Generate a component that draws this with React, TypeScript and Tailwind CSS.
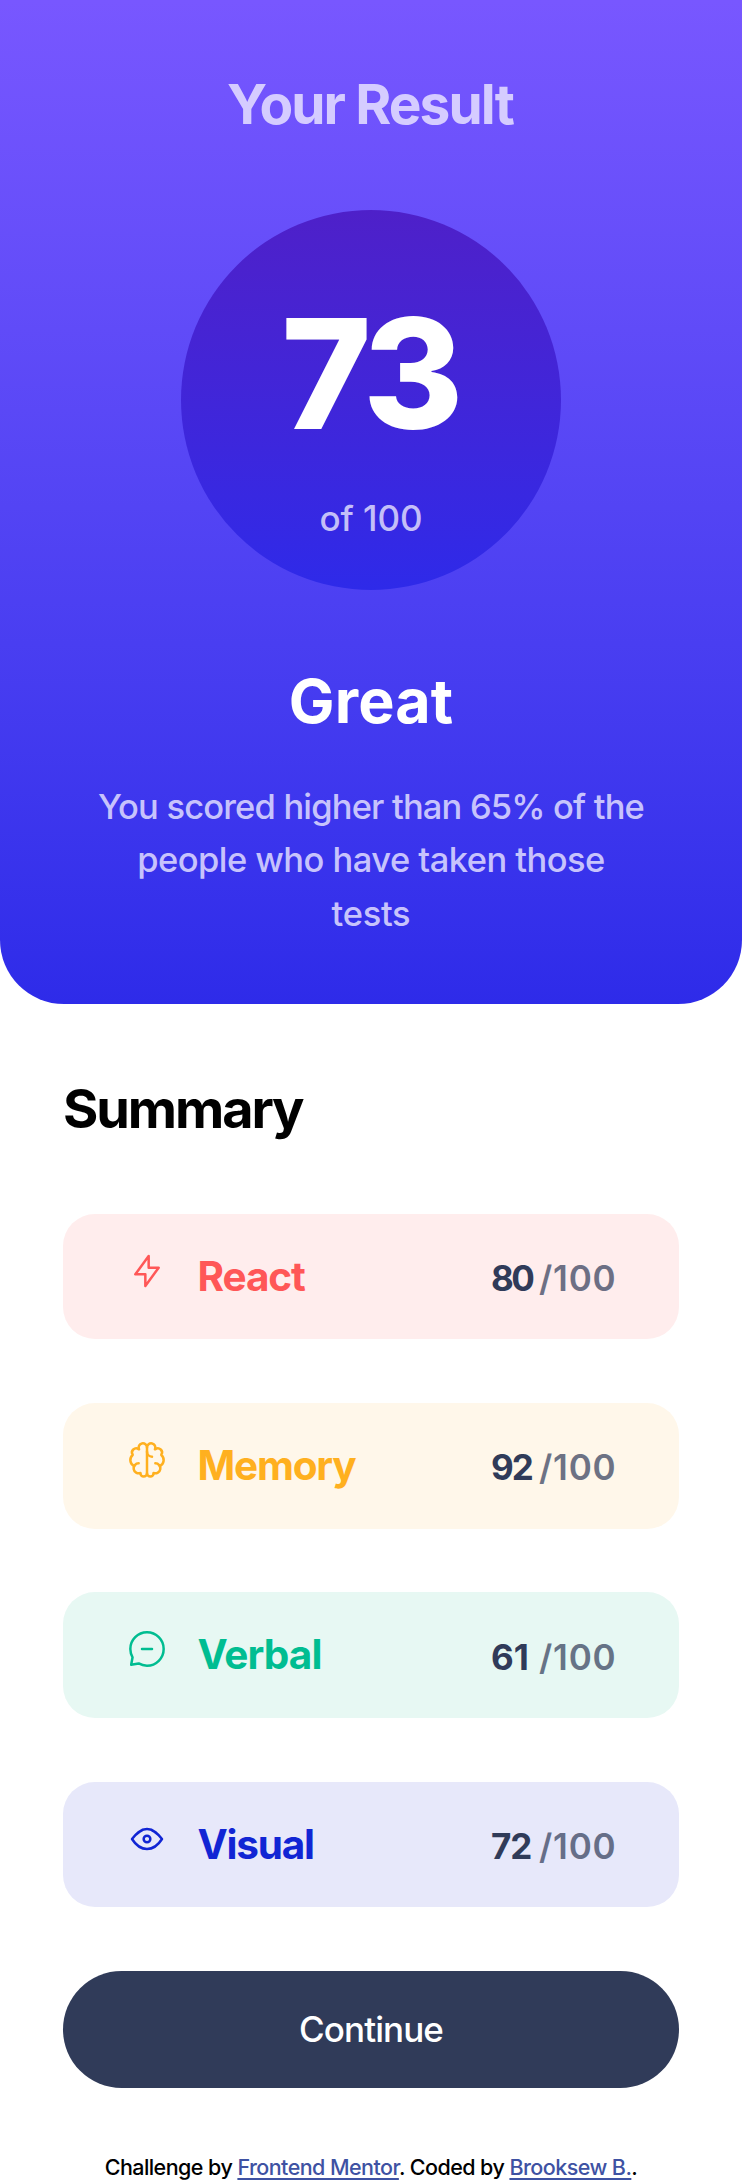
import type { ReactNode } from "react";

type Category = {
  name: string;
  score: number;
  card: string;
  label: string;
  digits: string;
  icon: ReactNode;
};

const categories: Category[] = [
  {
    name: "React",
    score: 80,
    card: "bg-[#ffeded]",
    label: "text-[#ff5757] tracking-[-1.1px]",
    digits: "tracking-[-2.5px]",
    icon: <path d="M10.833 8.333V2.5l-6.666 9.167h5V17.5l6.666-9.167h-5Z" />,
  },
  {
    name: "Memory",
    score: 92,
    card: "bg-[#fff7ea]",
    label: "text-[#ffb01f] tracking-[-1.2px]",
    digits: "tracking-[-2px]",
    icon: (
      <>
        <path d="M5.833 11.667a2.5 2.5 0 1 0 .834 4.858" />
        <path d="M3.553 13.004a3.333 3.333 0 0 1-.728-5.53m.025-.067a2.083 2.083 0 0 1 2.983-2.824m.199.054A2.083 2.083 0 1 1 10 3.75v12.917a1.667 1.667 0 0 1-3.333 0" />
        <path d="M14.167 11.667a2.5 2.5 0 1 1-.834 4.858" />
        <path d="M16.447 13.004a3.334 3.334 0 0 0 .728-5.53m-.025-.067a2.083 2.083 0 0 0-2.983-2.824M10 3.75a2.085 2.085 0 0 1 2.538-2.033 2.084 2.084 0 0 1 1.43 2.92m-.635 12.03a1.667 1.667 0 0 1-3.333 0M10 5.833a2.5 2.5 0 0 0 2.5 2.5" />
      </>
    ),
  },
  {
    name: "Verbal",
    score: 61,
    card: "bg-[#e7f8f3]",
    label: "text-[#00bd91] tracking-[-0.9px]",
    digits: "tracking-[0px]",
    icon: (
      <path d="M7.5 10h5M10 18.333A8.333 8.333 0 1 0 1.667 10c0 1.518.406 2.942 1.115 4.167l-.699 3.75 3.75-.699A8.295 8.295 0 0 0 10 18.333Z" />
    ),
  },
  {
    name: "Visual",
    score: 72,
    card: "bg-[#e7e8fa]",
    label: "text-[#1125d4] tracking-[-1.2px]",
    digits: "tracking-[-1px]",
    icon: (
      <>
        <path d="M10 11.667a1.667 1.667 0 1 0 0-3.334 1.667 1.667 0 0 0 0 3.334Z" />
        <path d="M17.5 10c-1.574 2.492-4.402 5-7.5 5s-5.926-2.508-7.5-5C4.416 7.632 6.66 5 10 5s5.584 2.632 7.5 5Z" />
      </>
    ),
  },
];

function CategoryRow({ name, score, card, label, digits, icon }: Category) {
  return (
    <li className={`flex h-[125.5px] items-start rounded-[32px] pl-[63.5px] ${card}`}>
      <span className={`flex items-start ${label}`}>
        <svg
          viewBox="0 0 20 20"
          className="mt-[37px] size-10 shrink-0"
          fill="none"
          stroke="currentColor"
          strokeWidth="1.25"
          strokeLinecap="round"
          strokeLinejoin="round"
        >
          {icon}
        </svg>
        <span className="ml-[31px] mt-[35px] text-[40.5px] font-bold leading-[56px]">{name}</span>
      </span>
      <span className="ml-auto mt-[40.2px] flex w-[188px] text-[35px] leading-[48px] text-[#303b59]">
        <span className={`w-[48px] font-bold ${digits}`}>{score}</span>
        <span className="font-semibold tracking-[0.8px] opacity-70">/100</span>
      </span>
    </li>
  );
}

export default function App() {
  return (
    <main className="flex w-[742px] flex-col bg-white font-['Inter',sans-serif] text-black">
      <section className="flex h-[1003.5px] flex-col items-center whitespace-nowrap rounded-b-[64px] bg-linear-to-b from-[#7857ff] to-[#2e2be9] pt-[68px] text-center">
        <h1 className="mr-[2px] text-[55px] font-bold leading-[72px] tracking-[-1.9px] text-[#d5ccff]">Your Result</h1>
        <div className="mt-[70px] flex size-[380px] flex-col items-center rounded-full bg-linear-to-b from-[#4e20c9] to-[#2e2ae9] pt-[88px]">
          <strong className="mr-[3px] text-[153px] font-extrabold leading-[152px] tracking-[-6px] text-white">73</strong>
          <span className="mt-[44px] text-[35px] font-medium leading-[48px] tracking-[-0.1px] text-[#c4bff8]">of 100</span>
        </div>
        <h2 className="mt-[71px] text-[61px] font-bold leading-[80px] tracking-[0.1px] text-white">Great</h2>
        <p className="mt-[38.5px] text-[34.5px] font-medium leading-[53.5px] text-[#c7c3fc]">
          <span className="block tracking-[-0.83px]">You scored higher than 65% of the</span>
          <span className="block tracking-[-0.54px]">people who have taken those</span>
          <span className="block tracking-[-0.3px]">tests</span>
        </p>
      </section>

      <section className="flex flex-col px-[63px] pt-[69px]">
        <h2 className="text-[54px] font-bold leading-[72px] tracking-[-2.1px]">Summary</h2>
        <ul className="mt-[69.2px] flex flex-col gap-[63.9px]">
          {categories.map((category) => (
            <CategoryRow key={category.name} {...category} />
          ))}
        </ul>
        <button className="mt-[63.6px] h-[117px] rounded-full bg-[#303b59] text-[35px] font-medium tracking-[-0.9px] text-white">
          Continue
        </button>
      </section>

      <footer className="mt-[65.5px] whitespace-nowrap text-center text-[21.5px] font-medium leading-[28px] tracking-[-0.56px]">
        Challenge by{" "}
        <a href="#mentor" className="text-[#3e52a3] underline decoration-2 underline-offset-[3px]">
          Frontend Mentor
        </a>
        . Coded by{" "}
        <a href="#author" className="text-[#3e52a3] underline decoration-2 underline-offset-[3px]">
          Brooksew B.
        </a>
        .
      </footer>
    </main>
  );
}
